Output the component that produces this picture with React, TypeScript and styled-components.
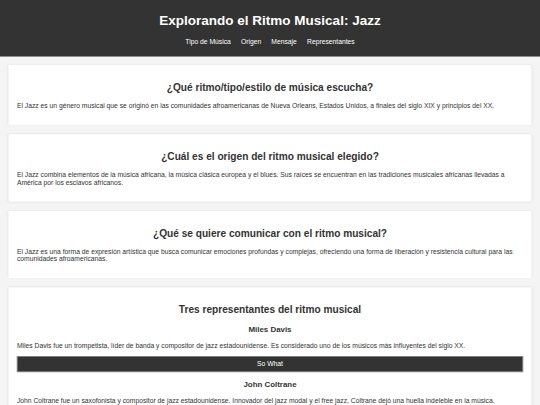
import { FC } from 'react';
import styled, { createGlobalStyle } from 'styled-components';

// The layout is drawn at a 1280px desktop width and shrunk to fit the 540px frame.
const SCALE = 540 / 1280;

const GlobalStyle = createGlobalStyle`
  html,
  body {
    margin: 0;
    overflow: hidden;
  }

  body {
    background: #f4f4f4;
    color: #333;
    font-family: 'Liberation Sans', Arial, sans-serif;
  }
`;

const Frame = styled.div`
  width: 100%;
  height: 100vh;
  overflow: hidden;
`;

const Page = styled.div`
  width: 1280px;
  transform: scale(${SCALE});
  transform-origin: 0 0;
`;

const Header = styled.header`
  background: #333;
  color: #fff;
  text-align: center;
  padding: 10px 0;
`;

const Title = styled.h1`
  font-size: 32px;
  margin: 21.44px 0;
`;

const NavList = styled.ul`
  display: flex;
  justify-content: center;
  list-style: none;
  margin: 16px 0;
  padding: 0;
`;

const NavItem = styled.li`
  margin: 0 12px;
`;

const NavLink = styled.a`
  color: #fff;
  text-decoration: none;
  font-size: 16px;
`;

const Main = styled.main`
  padding: 20px;
`;

const Section = styled.section`
  background: #fff;
  padding: 20px;
  margin-bottom: 22px;
  box-shadow: 0 0 5px rgba(0, 0, 0, 0.1);
`;

const Heading = styled.h2`
  font-size: 24px;
  margin: 19.92px 0;
  text-align: center;
`;

const Text = styled.p`
  font-size: 16px;
  margin: 16px 0;
`;

const Artist = styled.div``;

const ArtistName = styled.h3`
  font-size: 18.72px;
  margin: 18.72px 0;
  text-align: center;
`;

const PlayButton = styled.button`
  display: block;
  width: 100%;
  background: #333;
  color: #fff;
  border: 2px solid #8c8c8c;
  padding: 8px 0;
  font-family: inherit;
  font-size: 16px;
  cursor: pointer;
`;

const navLinks = [
  { href: '#tipo', label: 'Tipo de Música' },
  { href: '#origen', label: 'Origen' },
  { href: '#mensaje', label: 'Mensaje' },
  { href: '#representantes', label: 'Representantes' },
];

const artists = [
  {
    name: 'Miles Davis',
    bio: 'Miles Davis fue un trompetista, líder de banda y compositor de jazz estadounidense. Es considerado uno de los músicos más influyentes del siglo XX.',
    song: 'So What',
  },
  {
    name: 'John Coltrane',
    bio: 'John Coltrane fue un saxofonista y compositor de jazz estadounidense. Innovador del jazz modal y el free jazz, Coltrane dejó una huella indeleble en la música.',
    song: 'Giant Steps',
  },
  {
    name: 'Louis Armstrong',
    bio: 'Louis Armstrong fue un trompetista y cantante de jazz estadounidense, una de las figuras más carismáticas e innovadoras de la historia del jazz.',
    song: 'What a Wonderful World',
  },
];

const App: FC = () => {
  return (
    <Frame>
      <GlobalStyle />
      <Page>
        {/* Header */}
        <Header>
          <Title>Explorando el Ritmo Musical: Jazz</Title>
          <nav>
            <NavList>
              {navLinks.map((link) => (
                <NavItem key={link.href}>
                  <NavLink href={link.href}>{link.label}</NavLink>
                </NavItem>
              ))}
            </NavList>
          </nav>
        </Header>

        <Main>
          {/* Tipo de música */}
          <Section id="tipo">
            <Heading>¿Qué ritmo/tipo/estilo de música escucha?</Heading>
            <Text>
              El Jazz es un género musical que se originó en las comunidades afroamericanas de
              Nueva Orleans, Estados Unidos, a finales del siglo XIX y principios del XX.
            </Text>
          </Section>

          {/* Origen */}
          <Section id="origen">
            <Heading>¿Cuál es el origen del ritmo musical elegido?</Heading>
            <Text>
              El Jazz combina elementos de la música africana, la música clásica europea y el
              blues. Sus raíces se encuentran en las tradiciones musicales africanas llevadas a
              América por los esclavos africanos.
            </Text>
          </Section>

          {/* Mensaje */}
          <Section id="mensaje">
            <Heading>¿Qué se quiere comunicar con el ritmo musical?</Heading>
            <Text>
              El Jazz es una forma de expresión artística que busca comunicar emociones profundas
              y complejas, ofreciendo una forma de liberación y resistencia cultural para las
              comunidades afroamericanas.
            </Text>
          </Section>

          {/* Representantes */}
          <Section id="representantes">
            <Heading>Tres representantes del ritmo musical</Heading>
            {artists.map((artist) => (
              <Artist key={artist.name}>
                <ArtistName>{artist.name}</ArtistName>
                <Text>{artist.bio}</Text>
                <PlayButton>{artist.song}</PlayButton>
              </Artist>
            ))}
          </Section>
        </Main>
      </Page>
    </Frame>
  );
};

export default App;
